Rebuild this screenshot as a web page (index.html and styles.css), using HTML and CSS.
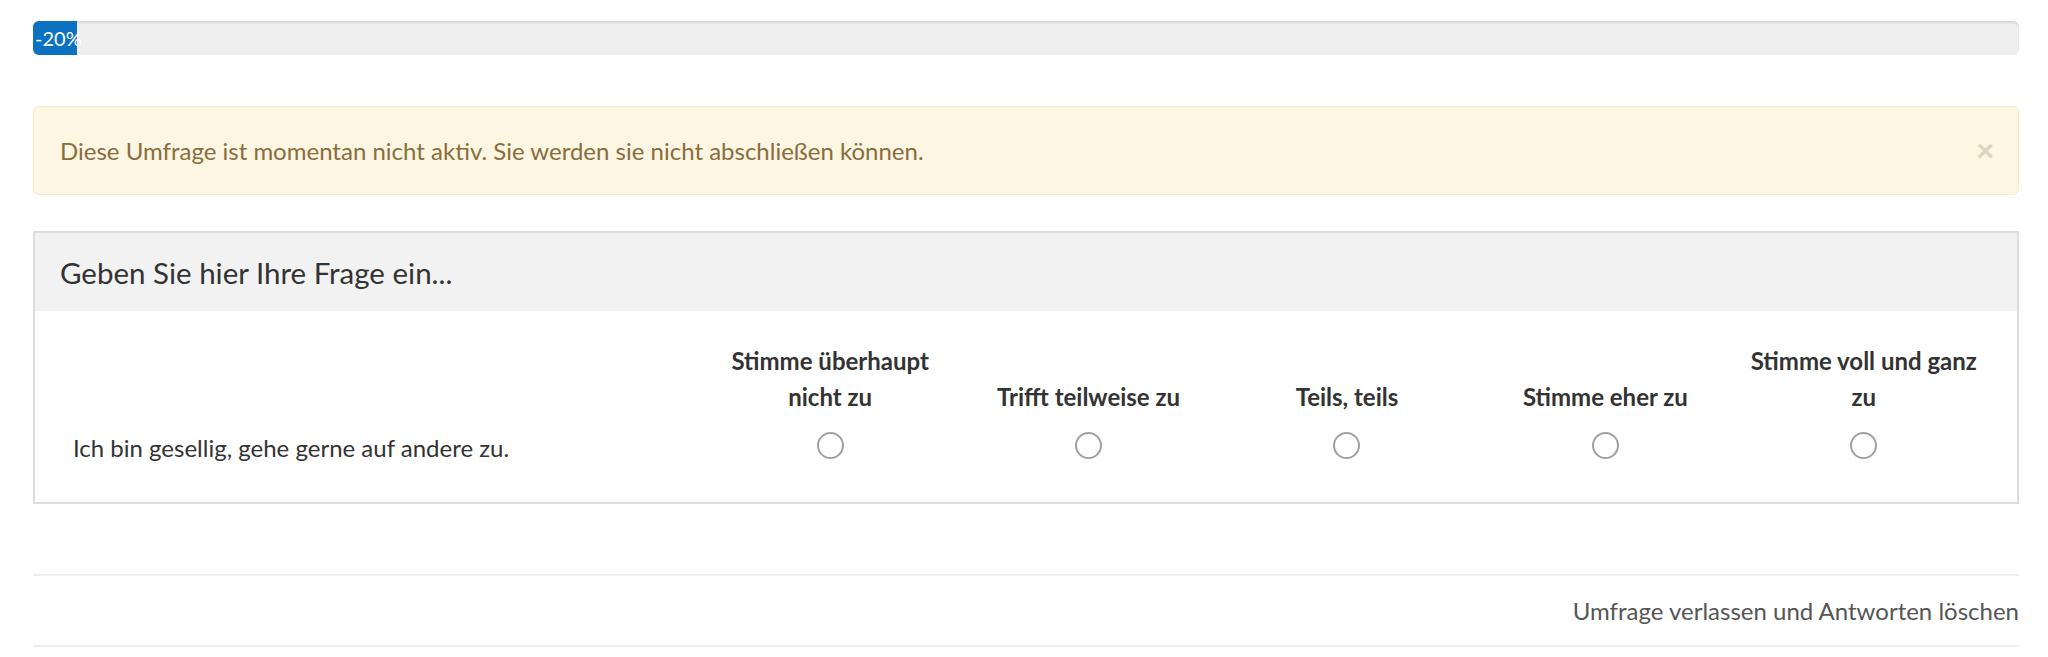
FILE: index.html
```html
<!DOCTYPE html>
<html lang="de">
<head>
    <meta charset="UTF-8">
    <meta name="viewport" content="width=device-width, initial-scale=1.0">
    <title>Umfrage</title>
    <link rel="stylesheet" href="styles.css">
</head>
<body>
    <div class="survey">
        <div class="progress">
            <div class="progress-bar">-20%</div>
        </div>

        <div class="alert">
            <span>Diese Umfrage ist momentan nicht aktiv. Sie werden sie nicht abschließen können.</span>
            <button class="close" type="button">&times;</button>
        </div>

        <div class="question">
            <div class="question-head">Geben Sie hier Ihre Frage ein...</div>
            <div class="question-body">
                <table class="matrix">
                    <thead>
                        <tr>
                            <th class="answer-text"></th>
                            <th>Stimme überhaupt nicht zu</th>
                            <th>Trifft teilweise zu</th>
                            <th>Teils, teils</th>
                            <th>Stimme eher zu</th>
                            <th>Stimme voll und ganz zu</th>
                        </tr>
                    </thead>
                    <tbody>
                        <tr>
                            <td class="answer-text">Ich bin gesellig, gehe gerne auf andere zu.</td>
                            <td><input type="radio" name="q1"></td>
                            <td><input type="radio" name="q1"></td>
                            <td><input type="radio" name="q1"></td>
                            <td><input type="radio" name="q1"></td>
                            <td><input type="radio" name="q1"></td>
                        </tr>
                    </tbody>
                </table>
            </div>
        </div>

        <div class="footer">
            <a href="#">Umfrage verlassen und Antworten löschen</a>
        </div>
    </div>
</body>
</html>
```

FILE: styles.css
```css
body {
    margin: 0;
    background-color: #ffffff;
    color: #333333;
    font-family: Lato, "Open Sans", sans-serif;
}

.survey {
    padding: 21px 29px 0 33px;
}

/* barra de progreso */
.progress {
    height: 34px;
    background-color: #efefef;
    border-radius: 6px;
    box-shadow: inset 0 2px 2px rgba(0, 0, 0, 0.1);
    overflow: hidden;
}

.progress-bar {
    width: 42px;
    height: 100%;
    background-color: #0b72c2;
    color: #ffffff;
    font-size: 20px;
    line-height: 34px;
    padding-left: 2px;
    white-space: nowrap;
}

.alert {
    margin-top: 51px;
    height: 87px;
    display: flex;
    align-items: center;
    justify-content: space-between;
    padding: 0 24px 0 26px;
    background-color: #fdf6e3;
    border: 1px solid #faebcc;
    border-radius: 6px;
    color: #8a6d3b;
    font-size: 24px;
}

.close {
    background: none;
    border: none;
    padding: 0;
    font-size: 30px;
    font-weight: bold;
    line-height: 1;
    color: #ddd5bd;
    cursor: pointer;
}

.question {
    margin-top: 36px;
    border: 2px solid #dddddd;
}

.question-head {
    height: 78px;
    display: flex;
    align-items: center;
    padding-left: 25px;
    background-color: #f2f2f2;
    font-size: 29.5px;
    color: #333333;
}

.question-body {
    padding: 32px 24px 39px 20px;
}

.matrix {
    width: 100%;
    border-collapse: collapse;
    table-layout: fixed;
}

.matrix th {
    font-size: 24px;
    font-weight: bold;
    line-height: 36px;
    text-align: center;
    vertical-align: bottom;
    padding: 0 10px 0;
    color: #333333;
}

.matrix th.answer-text {
    width: 33.333%;
    padding: 0;
}

.matrix td {
    text-align: center;
    vertical-align: middle;
    padding-top: 17px;
}

.matrix td.answer-text {
    text-align: left;
    font-size: 24px;
    padding-left: 18px;
    padding-top: 18px;
}

.matrix input[type="radio"] {
    appearance: none;
    width: 27px;
    height: 27px;
    margin: 0;
    border: 2px solid #a0a0a0;
    border-radius: 50%;
    background: #ffffff;
    cursor: pointer;
}

.footer {
    margin-top: 70px;
    border-top: 2px solid #eeeeee;
    border-bottom: 2px solid #eeeeee;
    height: 69px;
    display: flex;
    align-items: center;
    justify-content: flex-end;
}

.footer a {
    color: #555555;
    text-decoration: none;
    font-size: 24px;
}
```
